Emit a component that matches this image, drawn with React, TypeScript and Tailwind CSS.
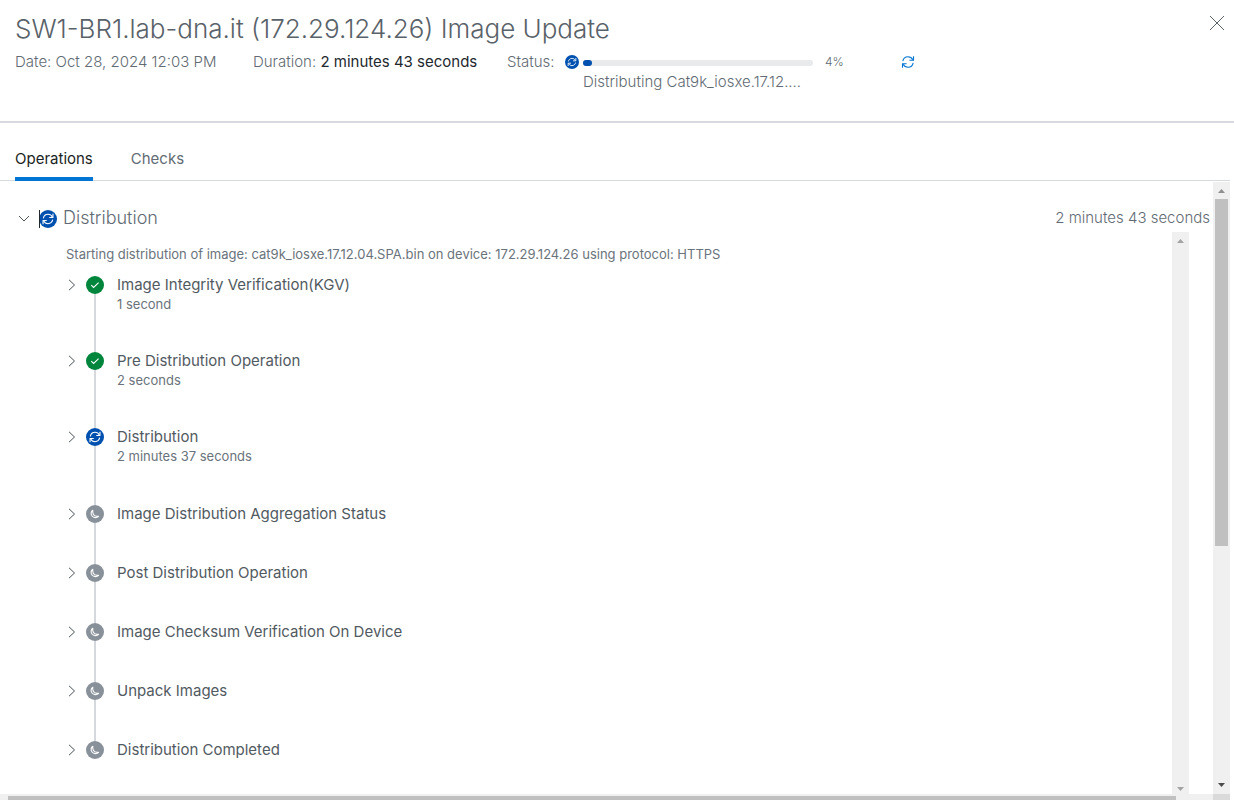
import React from "react";

type Status = "success" | "running" | "pending";

interface Operation {
  name: string;
  status: Status;
  duration?: string;
}

const operations: Operation[] = [
  { name: "Image Integrity Verification(KGV)", status: "success", duration: "1 second" },
  { name: "Pre Distribution Operation", status: "success", duration: "2 seconds" },
  { name: "Distribution", status: "running", duration: "2 minutes 37 seconds" },
  { name: "Image Distribution Aggregation Status", status: "pending" },
  { name: "Post Distribution Operation", status: "pending" },
  { name: "Image Checksum Verification On Device", status: "pending" },
  { name: "Unpack Images", status: "pending" },
  { name: "Distribution Completed", status: "pending" },
];

const progress = 4;

function SyncArrows() {
  return (
    <g fill="none" stroke="currentColor">
      <path d="M.8 5.200C1.400 2.400 3.600.8 6 .8c2.100 0 3.900 1.200 4.800 3" />
      <path d="M11.500.3v4H7.400" />
      <path d="M11.200 6.800c-.6 2.800-2.800 4.400-5.200 4.400-2.100 0-3.900-1.200-4.800-3" />
      <path d="M.5 11.700v-4h4.100" />
    </g>
  );
}

function StatusIcon({ status, className = "size-[18px]" }: { status: Status; className?: string }) {
  if (status === "success") {
    return (
      <svg viewBox="0 0 18 18" className={`${className} block shrink-0`} aria-label="Success">
        <circle cx="9" cy="9" r="9" fill="#00853c" />
        <path d="M5.300 9.200l2.300 2.300 5-4.800" fill="none" stroke="#fff" strokeWidth="1.1" />
      </svg>
    );
  }
  if (status === "running") {
    return (
      <svg viewBox="0 0 18 18" className={`${className} block shrink-0 text-white`} aria-label="In progress">
        <circle cx="9" cy="9" r="9" fill="#0051af" />
        <g transform="translate(3.6 3.6) scale(.9)" strokeWidth="1.2">
          <SyncArrows />
        </g>
      </svg>
    );
  }
  return (
    <svg viewBox="0 0 18 18" className={`${className} block shrink-0`} aria-label="Pending">
      <circle cx="9" cy="9" r="9" fill="#889099" />
      <path
        d="M6.800 5.200C4.800 6.400 4.600 9.200 6 11c1.600 2 4.800 2.200 6.600.3-2.600.3-4.500-.5-5.300-2.100C6.700 8 6.500 6.600 6.800 5.200z"
        fill="none"
        stroke="#fff"
        strokeWidth="1.1"
        strokeLinejoin="round"
      />
    </svg>
  );
}

function ScrollArrow({ down = false, className = "text-[#a3a3a3]" }: { down?: boolean; className?: string }) {
  return (
    <svg viewBox="0 0 17 17" className={`${className} block size-[17px] shrink-0`}>
      <path d={down ? "M5 6h7l-3.500 4z" : "M5 11h7L8.500 7z"} fill="currentColor" />
    </svg>
  );
}

function OperationRow({ operation, last }: { operation: Operation; last: boolean }) {
  const { name, status, duration } = operation;
  return (
    <li className="flex">
      <button type="button" aria-label={`Expand ${name}`} className="flex h-5 w-3 items-center justify-center">
        <svg viewBox="0 0 12 12" className="size-3" fill="none" stroke="#4b5259">
          <path d="M3 .8l5.500 5.200L3 11.200" />
        </svg>
      </button>
      <div className="ml-2 flex w-[18px] flex-col items-center pt-px">
        <StatusIcon status={status} />
        {!last && <div className="-mb-px w-0.5 flex-1 bg-[#d5d9dd]" />}
      </div>
      <div className={status === "success" ? "ml-[13px] pb-[38px]" : "ml-[13px] pb-[39px]"}>
        <h3 className="text-[15px] leading-5 text-[#525a61]">{name}</h3>
        {duration && <p className="text-[13px] leading-[18px] text-[#6a737b]">{duration}</p>}
      </div>
    </li>
  );
}

export default function App() {
  return (
    <div className="flex h-screen flex-col overflow-hidden bg-white font-['Inter',sans-serif] text-[#626b73]">
      {/* Header */}
      <header className="border-b-2 border-[#d7dade] pt-3 pb-[29px] pl-[15px]">
        <div className="flex items-start justify-between pr-[9px]">
          <h1 className="text-[26px] leading-[34px] font-light text-[#596269]">
            SW1-BR1.lab-dna.it (172.29.124.26) Image Update
          </h1>
          <button type="button" aria-label="Close" className="mt-[3px]">
            <svg viewBox="0 0 16 16" className="block size-4" fill="none" stroke="#5c646b">
              <path d="M1 1l14 14M15 1L1 15" />
            </svg>
          </button>
        </div>
        <div className="mt-1.5 flex items-start text-[15px] leading-5 font-light">
          <p className="w-[238px]">Date: Oct 28, 2024 12:03 PM</p>
          <p className="w-[254px]">
            Duration: <span className="font-normal text-[#23282e]">2 minutes 43 seconds</span>
          </p>
          <p className="w-[58px]">Status:</p>
          <div className="flex h-5 w-[18px] items-center">
            <StatusIcon status="running" className="size-[14px]" />
          </div>
          <div className="w-[230px]">
            <div className="flex h-5 items-center">
              <div
                role="progressbar"
                aria-label="Status"
                aria-valuenow={progress}
                className="mt-px h-1.5 w-full rounded-full bg-[#e8eaec]"
              >
                <div className="h-1.5 rounded-full bg-[#0051af]" style={{ width: `${progress}%` }} />
              </div>
            </div>
            <p className="whitespace-nowrap">Distributing Cat9k_iosxe.17.12.…</p>
          </div>
          <p className="ml-3 w-[77px] text-xs leading-5">{progress}%</p>
          <button type="button" aria-label="Refresh" className="flex h-5 items-center text-[#0175d3]">
            <svg viewBox="0 0 12 12" className="size-3 overflow-visible" strokeWidth="1.1">
              <SyncArrows />
            </svg>
          </button>
        </div>
      </header>

      {/* Tabs */}
      <nav role="tablist" className="mr-1 flex gap-[38px] border-b border-[#d7dade] pt-[26px] pl-[15px] text-[15px] leading-5">
        <button type="button" role="tab" aria-selected="true" className="-mb-px border-b-4 border-[#0175d3] pb-2 text-[#1b1f23]">
          Operations
        </button>
        <button type="button" role="tab" aria-selected="false" className="-mb-px border-b-4 border-transparent pb-2">
          Checks
        </button>
      </nav>

      {/* Operations panel */}
      <div className="mt-px mr-1 flex min-h-0 flex-1">
        <main className="flex min-w-0 flex-1 flex-col">
          <div className="flex items-center pt-[26px] pr-[3px] pb-1 pl-[18px] leading-5 font-light">
            <button type="button" aria-label="Collapse Distribution" className="mr-[9px]">
              <svg viewBox="0 0 12 12" className="block size-3" fill="none" stroke="#4b5259">
                <path d="M1 4l5 5 5-5" />
              </svg>
            </button>
            <div className="relative mt-px">
              <StatusIcon status="running" />
              <span className="absolute top-0 left-0 h-[18px] w-px bg-[#23282e]" />
            </div>
            <h2 className="ml-1.5 text-lg leading-5">Distribution</h2>
            <span className="ml-auto text-[15px] leading-5">2 minutes 43 seconds</span>
          </div>

          <div className="flex min-h-0 flex-1 pr-6">
            <div className="min-w-0 flex-1 overflow-hidden pt-3 pl-[66px]">
              <p className="text-[13px] leading-5 text-[#6a737b]">
                Starting distribution of image: cat9k_iosxe.17.12.04.SPA.bin on device: 172.29.124.26 using protocol: HTTPS
              </p>
              <ul className="mt-[11px]">
                {operations.map((operation, index) => (
                  <OperationRow key={operation.name} operation={operation} last={index === operations.length - 1} />
                ))}
              </ul>
            </div>
            <div aria-hidden="true" className="flex w-[17px] flex-col justify-between bg-[#f0f0f0]">
              <ScrollArrow />
              <ScrollArrow down className="-mb-1 text-[#a3a3a3]" />
            </div>
          </div>
        </main>

        <div aria-hidden="true" className="flex w-[17px] flex-col bg-[#f0f0f0]">
          <ScrollArrow className="text-[#8f8f8f]" />
          <div className="flex-1 px-0.5">
            <div className="h-3/5 bg-[#c0c0c0]" />
          </div>
          <ScrollArrow down className="text-[#4c4c4c]" />
        </div>
      </div>

      {/* Horizontal scrollbar, cut off by the window edge */}
      <div aria-hidden="true" className="mr-1 flex h-1.5 shrink-0 bg-[#f0f0f0]">
        <div className="mt-0.5 mr-[37px] ml-2 flex-1 bg-[#c0c0c0]" />
        <div className="w-[17px] bg-[#dadada]" />
      </div>
    </div>
  );
}
